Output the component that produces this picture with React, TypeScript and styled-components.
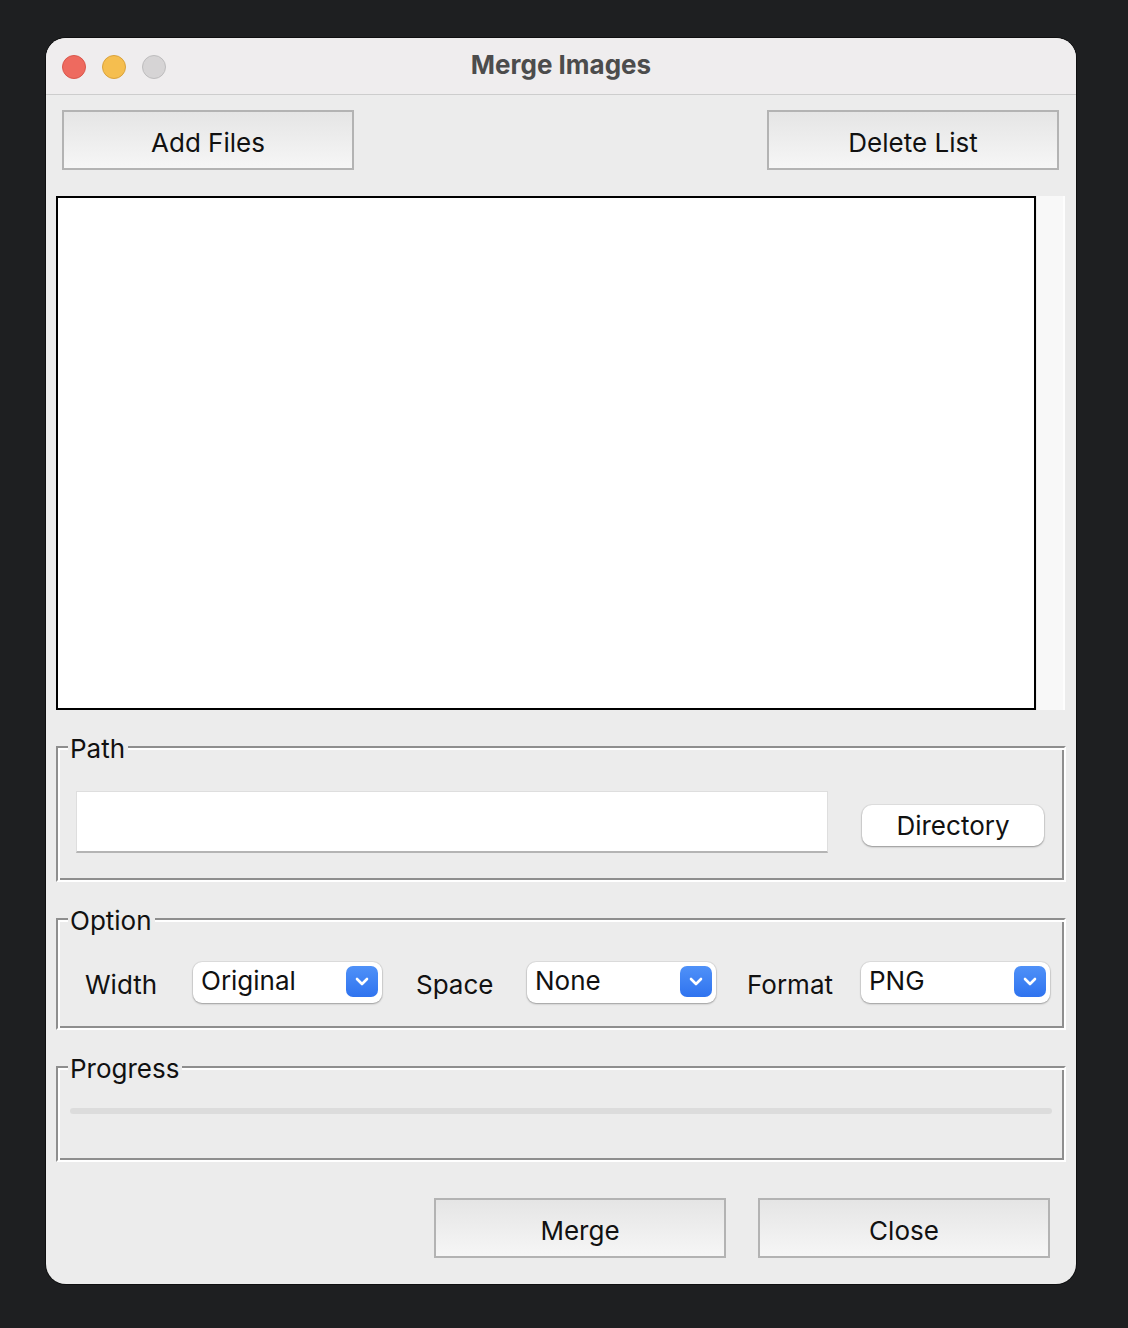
import React from "react";
import styled, { createGlobalStyle } from "styled-components";

const Global = createGlobalStyle`
  html, body {
    margin: 0;
    padding: 0;
    background: #1e1f21;
  }
  body {
    font-family: Inter, "Noto Sans", "Liberation Sans", sans-serif;
    -webkit-font-smoothing: antialiased;
  }
  #root {
    min-height: 1328px;
    padding-top: 38px;
    padding-left: 46px;
    box-sizing: border-box;
  }
`;

const Window = styled.div`
  width: 1030px;
  height: 1246px;
  border-radius: 20px;
  background: #ececec;
  overflow: hidden;
  display: flex;
  flex-direction: column;
  box-shadow: 0 0 0 1px rgba(0, 0, 0, 0.5);
`;

const TitleBar = styled.div`
  height: 56px;
  flex: none;
  background: #efedee;
  border-bottom: 1px solid #cdcdcd;
  display: flex;
  align-items: center;
  position: relative;
  padding-left: 16px;
`;

const Lights = styled.div`
  display: flex;
  gap: 16px;
  margin-top: 2px;
`;

const Light = styled.span<{ $c: string; $b: string }>`
  width: 24px;
  height: 24px;
  border-radius: 50%;
  box-sizing: border-box;
  background: ${(p) => p.$c};
  border: 1px solid ${(p) => p.$b};
`;

const Title = styled.div`
  position: absolute;
  left: 0;
  right: 0;
  top: 0;
  bottom: 4px;
  display: flex;
  align-items: center;
  justify-content: center;
  font-size: 26px;
  font-weight: 700;
  color: #4c4c4c;
  pointer-events: none;
`;

const Content = styled.div`
  flex: 1;
  display: flex;
  flex-direction: column;
  padding: 15px 10px 0 10px;
`;

const TopRow = styled.div`
  display: flex;
  justify-content: space-between;
  padding: 0 7px 0 6px;
`;

const PushButton = styled.button`
  width: 292px;
  height: 60px;
  box-sizing: border-box;
  border: 2px solid #b3b3b3;
  background: linear-gradient(#e5e5e5, #f6f6f6);
  font-family: inherit;
  font-size: 26px;
  color: #111;
  padding: 4px 0 0 0;
  margin: 0;
`;

const ListRow = styled.div`
  display: flex;
  height: 514px;
  margin-top: 26px;
`;

const ListBox = styled.div`
  width: 980px;
  box-sizing: border-box;
  border: 2px solid #000;
  background: #fff;
`;

const ScrollTrack = styled.div`
  width: 26px;
  margin-left: 1px;
  background: #f8f8f8;
  border-right: 2px solid #fdfdfd;
`;

const Frame = styled.div<{ $h: number }>`
  position: relative;
  height: ${(p) => p.$h}px;
  margin-top: 36px;
  box-sizing: border-box;
  border-style: solid;
  border-width: 2px;
  border-color: #8e8e8e #fff #fff #8e8e8e;
  box-shadow: inset 2px 2px 0 #fff, inset -2px -2px 0 #8e8e8e;
`;

const Legend = styled.span`
  position: absolute;
  left: 10px;
  top: -14px;
  padding: 0 3px 0 2px;
  line-height: 30px;
  font-size: 26px;
  color: #111;
  background: #ececec;
`;

const PathRow = styled.div`
  display: flex;
  align-items: flex-start;
  padding: 43px 0 0 18px;
`;

const PathInput = styled.div`
  width: 752px;
  height: 62px;
  flex: none;
  box-sizing: border-box;
  background: #fff;
  border: 1px solid #dedede;
  border-bottom: 2px solid #b4b4b4;
`;

const RoundButton = styled.button`
  width: 182px;
  height: 41px;
  flex: none;
  margin: 14px 0 0 34px;
  border: none;
  border-radius: 10px;
  background: #fff;
  box-shadow: 0 0 0 1px rgba(0, 0, 0, 0.05), 0 1px 2px rgba(0, 0, 0, 0.35);
  font-family: inherit;
  font-size: 26px;
  color: #111;
  padding: 0;
`;

const OptionRow = styled.div`
  display: flex;
  align-items: center;
  padding: 42px 0 0 27px;
`;

const OptionLabel = styled.span<{ $w: number; $gap: number }>`
  flex: none;
  width: ${(p) => p.$w}px;
  margin-left: ${(p) => p.$gap}px;
  padding-top: 4px;
  font-size: 26px;
  color: #111;
`;

const Select = styled.div`
  flex: none;
  width: 189px;
  height: 41px;
  box-sizing: border-box;
  border-radius: 9px;
  background: #fff;
  box-shadow: 0 0 0 1px rgba(0, 0, 0, 0.06), 0 1px 2px rgba(0, 0, 0, 0.3);
  display: flex;
  align-items: flex-start;
  justify-content: space-between;
  padding: 4px 4px 0 8px;
`;

const SelectText = styled.span`
  font-size: 26px;
  line-height: 30px;
  color: #111;
`;

const ArrowBox = styled.span`
  width: 32px;
  height: 31px;
  border-radius: 7px;
  background: linear-gradient(#4f91f8, #2f73ef);
  display: flex;
  align-items: center;
  justify-content: center;
`;

const ProgressArea = styled.div`
  padding: 40px 12px 0 12px;
`;

const ProgressTrack = styled.div`
  height: 6px;
  border-radius: 3px;
  background: #dcdcdc;
`;

const BottomRow = styled.div`
  display: flex;
  justify-content: flex-end;
  gap: 32px;
  margin-top: 36px;
  padding-right: 16px;
`;

const Chevron = () => (
  <svg width="14" height="9" viewBox="0 0 14 9">
    <path d="M2 2 L7 7 L12 2" fill="none" stroke="#fff" strokeWidth="2.6" strokeLinecap="round" strokeLinejoin="round" />
  </svg>
);

const Dropdown = ({ value }: { value: string }) => (
  <Select>
    <SelectText>{value}</SelectText>
    <ArrowBox>
      <Chevron />
    </ArrowBox>
  </Select>
);

export default function App() {
  return (
    <>
      <Global />
      <Window>
        <TitleBar>
          <Lights>
            <Light $c="#ee6a5f" $b="#d9574c" />
            <Light $c="#f5be4f" $b="#d9a23c" />
            <Light $c="#d6d4d5" $b="#bdbcbd" />
          </Lights>
          <Title>Merge Images</Title>
        </TitleBar>
        <Content>
          <TopRow>
            <PushButton>Add Files</PushButton>
            <PushButton>Delete List</PushButton>
          </TopRow>
          <ListRow>
            <ListBox />
            <ScrollTrack />
          </ListRow>
          <Frame $h={136}>
            <Legend>Path</Legend>
            <PathRow>
              <PathInput />
              <RoundButton>Directory</RoundButton>
            </PathRow>
          </Frame>
          <Frame $h={112}>
            <Legend>Option</Legend>
            <OptionRow>
              <OptionLabel $w={108} $gap={0}>Width</OptionLabel>
              <Dropdown value="Original" />
              <OptionLabel $w={111} $gap={34}>Space</OptionLabel>
              <Dropdown value="None" />
              <OptionLabel $w={114} $gap={31}>Format</OptionLabel>
              <Dropdown value="PNG" />
            </OptionRow>
          </Frame>
          <Frame $h={96}>
            <Legend>Progress</Legend>
            <ProgressArea>
              <ProgressTrack />
            </ProgressArea>
          </Frame>
          <BottomRow>
            <PushButton>Merge</PushButton>
            <PushButton>Close</PushButton>
          </BottomRow>
        </Content>
      </Window>
    </>
  );
}
